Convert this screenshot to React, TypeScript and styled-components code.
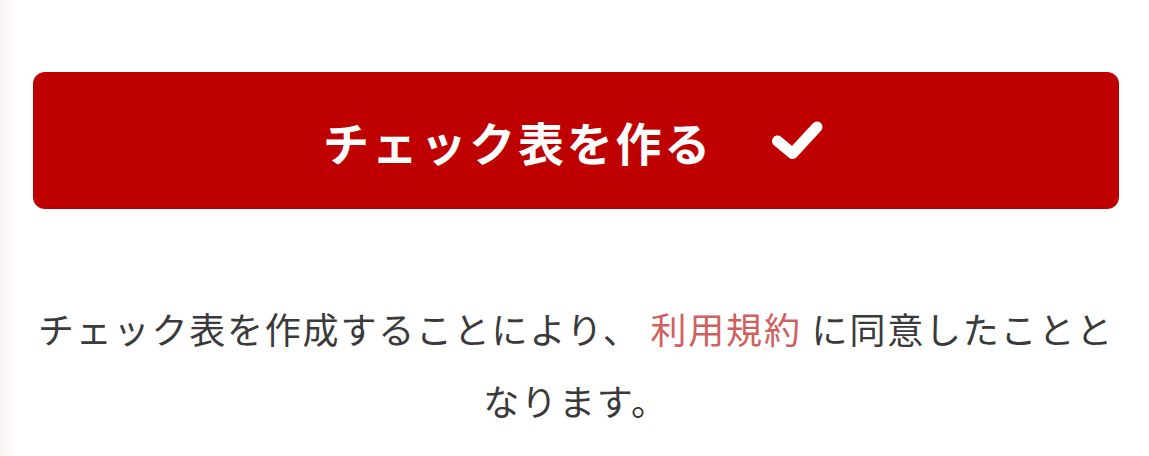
import React from "react";
import styled, { createGlobalStyle } from "styled-components";

const GlobalStyle = createGlobalStyle`
  html, body {
    margin: 0;
    padding: 0;
  }
  body {
    width: 1149px;
    height: 456px;
    overflow: hidden;
    background: linear-gradient(to right, #fbf2f2 0px, #fdf8f8 8px, #ffffff 17px);
    font-family: "Noto Sans CJK JP", "Noto Sans", sans-serif;
  }
`;

const Wrapper = styled.div`
  display: flex;
  flex-direction: column;
  align-items: stretch;
  padding: 72px 30px 0 33px;
`;

const CreateButton = styled.button`
  display: flex;
  align-items: center;
  justify-content: center;
  gap: 58px;
  height: 137px;
  border: none;
  border-radius: 12px;
  background: #bf0000;
  color: #ffffff;
  font-family: "Noto Sans CJK JP", sans-serif;
  font-weight: 700;
  font-size: 46px;
  letter-spacing: 0.06em;
  cursor: pointer;
  padding: 0 6px 0 0;
`;

const Label = styled.span`
  display: block;
  line-height: 1;
`;

const CheckIcon = styled.svg`
  width: 52px;
  height: 39px;
  flex-shrink: 0;
  fill: none;
  stroke: #ffffff;
  stroke-width: 11;
  stroke-linecap: round;
  stroke-linejoin: round;
`;

const Note = styled.p`
  margin: 83px 0 0;
  text-align: center;
  font-size: 36px;
  line-height: 72px;
  letter-spacing: 0.05em;
  color: #3a3a3a;
`;

const TermsLink = styled.a`
  color: #d0605e;
  text-decoration: none;
`;

export default function App() {
  return (
    <>
      <GlobalStyle />
      <Wrapper>
        <CreateButton type="button">
          <Label>チェック表を作る</Label>
          <CheckIcon viewBox="0 0 52 39" aria-hidden="true">
            <polyline points="6.5,20 21.5,32.5 46,6" />
          </CheckIcon>
        </CreateButton>
        <Note>
          チェック表を作成することにより、 <TermsLink href="#">利用規約</TermsLink> に同意したこととなります。
        </Note>
      </Wrapper>
    </>
  );
}
